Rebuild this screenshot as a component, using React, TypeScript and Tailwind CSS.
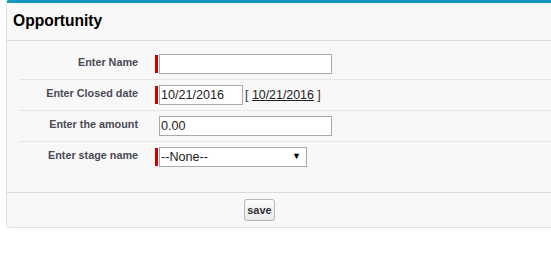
import React from "react";

const font = { fontFamily: '"Liberation Sans", Arial, sans-serif' };

function Row({
  label,
  required,
  children,
  last,
}: {
  label: string;
  required?: boolean;
  children: React.ReactNode;
  last?: boolean;
}) {
  return (
    <div className={`flex h-[31px] items-start pt-[5px] ${last ? "" : "border-b border-[#e6e6e6]"}`}>
      <div className="w-[119px] shrink-0 pt-[2px] text-right text-[10.8px] font-bold leading-[13px] text-[#4a4a56]">
        {label}
      </div>
      <div className="w-[17px] shrink-0" />
      <div className="flex items-start">
        <div className={`mt-[1px] h-[18px] w-[3px] ${required ? "bg-[#c00]" : ""}`} />
        <div className="ml-[1px] flex items-start">{children}</div>
      </div>
    </div>
  );
}

export default function App() {
  return (
    <div className="h-[267px] w-[551px] overflow-hidden bg-white" style={font}>
      <div className="ml-[6px] w-[560px] rounded-b-[4px] rounded-t-[3px] border-x border-b border-t-[3px] border-x-[#e0e0e0] border-b-[#e0e0e0] border-t-[#1797c0] bg-[#f8f8f8]">
        <div className="flex h-[38px] items-center border-b border-[#dbdbdb] pl-[6px]">
          <h2 className="mt-[-1px] text-[15.6px] font-bold text-black">Opportunity</h2>
        </div>
        <div className="ml-[12px] pt-[8px] pb-[19px]">
          <Row label="Enter Name" required>
            <div className="h-[20px] w-[173px] border border-[#a9a9a9] bg-white" />
          </Row>
          <Row label="Enter Closed date" required>
            <div className="flex h-[20px] w-[84px] items-center border border-[#a9a9a9] bg-white pl-[1px] text-[12.6px] text-[#222]">
              10/21/2016
            </div>
            <div className="ml-[2px] pt-[3px] text-[12.4px] leading-[15px] text-[#333]">
              [ <span className="text-[#222] underline">10/21/2016</span> ]
            </div>
          </Row>
          <Row label="Enter the amount">
            <div className="flex h-[20px] w-[173px] items-center border border-[#a9a9a9] bg-white pl-[1px] text-[12.6px] text-[#222]">
              0.00
            </div>
          </Row>
          <Row label="Enter stage name" required last>
            <div className="flex h-[20px] w-[148px] items-center justify-between border border-[#a9a9a9] bg-white pl-[1px] pr-[5px] text-[12.6px] text-[#222]">
              <span>--None--</span>
              <span className="text-[9px] text-black">▼</span>
            </div>
          </Row>
        </div>
        <div className="flex h-[35px] items-center border-t border-[#dbdbdb] pl-[237px]">
          <button className="h-[22px] w-[31px] rounded-[3px] border border-[#b5b5b5] bg-gradient-to-b from-[#fdfdfd] to-[#e9e9e9] text-[11px] font-bold text-[#333]">
            save
          </button>
        </div>
      </div>
    </div>
  );
}
